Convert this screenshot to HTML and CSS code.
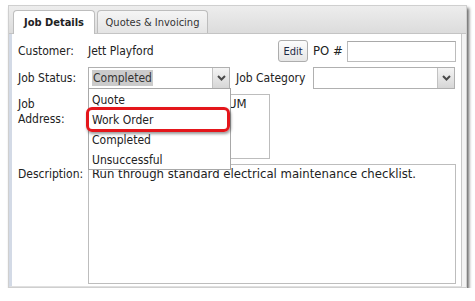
FILE: index.html
```html
<!DOCTYPE html>
<html>
<head>
<meta charset="utf-8">
<link rel="stylesheet" href="styles.css">
</head>
<body>
<div class="frame">
  <div class="tabbar">
    <div class="tab active">Job Details</div>
    <div class="tab">Quotes &amp; Invoicing</div>
  </div>
  <div class="panel">
    <div class="row r1">
      <div class="label">Customer:</div>
      <div class="value">Jett Playford</div>
      <button class="btn">Edit</button>
      <div class="po">PO #</div>
      <div class="input po-input"></div>
    </div>
    <div class="row r2">
      <div class="label">Job Status:</div>
      <div class="select status">
        <div class="sel-text"><span class="hl">Completed</span></div>
        <div class="arrow"><svg width="9" height="6" viewBox="0 0 9 6"><path d="M1 1 L4.5 4.5 L8 1" fill="none" stroke="#4a4a4a" stroke-width="2"/></svg></div>
        <div class="dropdown">
          <div class="opt">Quote</div>
          <div class="opt">Work Order</div>
          <div class="opt">Completed</div>
          <div class="opt">Unsuccessful</div>
          <div class="ring"></div>
        </div>
      </div>
      <div class="cat">Job Category</div>
      <div class="select category">
        <div class="sel-text"></div>
        <div class="arrow"><svg width="9" height="6" viewBox="0 0 9 6"><path d="M1 1 L4.5 4.5 L8 1" fill="none" stroke="#4a4a4a" stroke-width="2"/></svg></div>
      </div>
    </div>
    <div class="row r3">
      <div class="label">Job<br>Address:</div>
      <div class="textarea addr"><span class="addr-text">UM</span></div>
    </div>
    <div class="row r4">
      <div class="label">Description:</div>
      <div class="textarea desc">Run through standard electrical maintenance checklist.</div>
    </div>
  </div>
</div>
</body>
</html>
```
FILE: styles.css
```css
* { box-sizing: border-box; }
body {
  margin: 0;
  background: #fff;
  font-family: "DejaVu Sans Condensed", "DejaVu Sans", sans-serif;
  font-size: 12px;
  color: #222;
}
.frame {
  margin: 5px 0 0 8px;
  width: 459px;
  height: 283px;
  border: 1px solid #cfcfcf;
  background: #f3f3f3;
  box-shadow: 2px 3px 3px rgba(0,0,0,0.6);
  display: flex;
  flex-direction: column;
}
.tabbar {
  height: 28px;
  padding: 4px 0 0 4px;
  display: flex;
  gap: 2px;
  align-items: flex-end;
  background: linear-gradient(#ededed, #dcdcdc);
  border-bottom: 1px solid #c4c4c4;
}
.tab {
  height: 23px;
  padding: 0;
  display: flex;
  align-items: center;
  justify-content: center;
  white-space: nowrap;
  border: 1px solid #bdbdbd;
  border-bottom: none;
  border-radius: 4px 4px 0 0;
  background: linear-gradient(#f5f5f5, #e4e4e4);
  color: #333;
  width: 111px;
  font-size: 11px;
}
.tab.active {
  background: #fff;
  font-weight: bold;
  height: 24px;
  margin-bottom: -1px;
  width: 82px;
  color: #222;
}
.panel {
  flex: 1;
  width: 453px;
  background: #fff;
  border-left: 3px solid #d3dae6;
  border-right: 1px solid #c8c8c8;
  border-bottom: 1px solid #e0e0e0;
  padding: 6px 5px 0 6px;
  display: flex;
  flex-direction: column;
  gap: 5px;
}
.row { display: flex; white-space: nowrap; }
.label { width: 70px; flex: none; line-height: 15px; }
.r1 { height: 22px; align-items: center; }
.r1 .value { flex: 1; margin-top: -1px; }
.btn {
  width: 30px;
  height: 22px;
  padding: 0;
  border: 1px solid #adadad;
  border-radius: 3px;
  background: linear-gradient(#fdfdfd, #e6e6e6);
  font-family: inherit;
  font-size: 11px;
  color: #1e2a44;
}
.po { width: 39px; padding-left: 5px; font-size: 13px; margin-top: -2px; }
.input {
  border: 1px solid #bcbcbc;
  border-top-color: #a9a9a9;
  background: #fff;
}
.po-input { width: 109px; height: 21px; }
.r2 { height: 22px; align-items: center; }
.select {
  position: relative;
  height: 22px;
  width: 142px;
  border: 1px solid #b0b0b0;
  background: #fff;
  display: flex;
}
.sel-text { flex: 1; padding: 2px 3px; }
.hl { display: inline-block; background: #cbcbcb; color: #333; height: 16px; line-height: 16px; padding: 0 1px; }
.arrow {
  width: 17px;
  border-left: 1px solid #c2c2c2;
  background: linear-gradient(#f4f4f4, #d6d6d6);
  display: flex;
  align-items: center;
  justify-content: center;
}
.cat { width: 83px; padding-left: 6px; }
.r3 { height: 65px; }
.r3 .label { padding-top: 3px; }
.textarea {
  border: 1px solid #bdbdbd;
  background: #fff;
  padding: 1px 3px;
  font-size: 13px;
}
.addr { width: 182px; height: 65px; display: flex; justify-content: flex-end; }
.addr-text { width: 38px; }
.r4 { height: 120px; }
.r4 .label { padding-top: 3px; }
.desc { width: 368px; height: 120px; }
.dropdown {
  position: absolute;
  left: -1px;
  top: 20px;
  width: 143px;
  height: 82px;
  background: #fff;
  border: 1px solid #a8a8a8;
  padding-top: 1px;
  z-index: 2;
  font-size: 12px;
}
.opt { height: 20px; line-height: 20px; padding-left: 3px; color: #222; }
.ring {
  position: absolute;
  left: -3px;
  top: 18px;
  width: 144px;
  height: 25px;
  border: 3px solid #e4161b;
  border-radius: 6px;
  box-shadow: 1px 2px 3px rgba(0,0,0,0.4);
}
```
